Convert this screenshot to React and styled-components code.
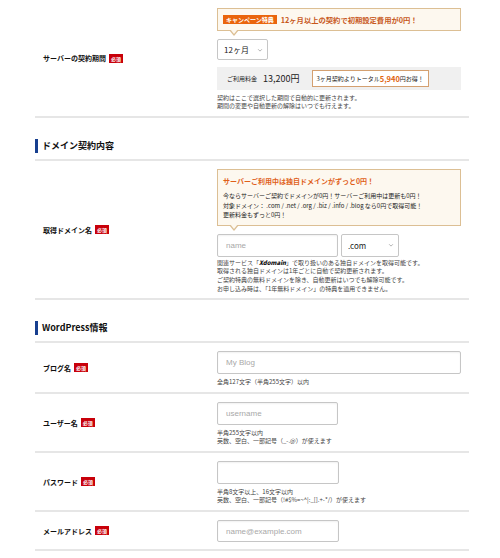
import React from 'react';
import styled, { createGlobalStyle } from 'styled-components';

const GlobalStyle = createGlobalStyle`
  body {
    margin: 0;
    background: #fff;
    font-family: "Noto Sans CJK JP", "Liberation Sans", sans-serif;
    color: #222;
  }
`;

const Page = styled.div`
  width: 434px;
  margin-left: 35px;
`;

const Row = styled.div`
  display: grid;
  grid-template-columns: 182px 1fr;
  border-bottom: 2px solid #e6e6e6;
`;

const Label = styled.div`
  display: flex;
  align-items: center;
  gap: 3px;
  padding-left: 8px;
  font-size: 7px;
  font-weight: 700;
  color: #111;
`;

const Required = styled.span`
  display: inline-flex;
  align-items: center;
  justify-content: center;
  width: 14px;
  height: 9px;
  background: #c8000a;
  color: #fff;
  font-size: 5px;
  font-weight: 700;
`;

const Cell = styled.div`
  display: flex;
  flex-direction: column;
  align-items: flex-start;
  padding: 8px 8px ${p => p.$pb ?? 6}px 0;
`;

const SectionTitle = styled.div`
  padding: 21px 0 6px;
  border-bottom: 2px solid #e6e6e6;
  h2 {
    margin: 0;
    border-left: 3px solid #173f8f;
    padding-left: 4px;
    font-size: 9px;
    line-height: 14px;
    font-weight: 700;
    color: #111;
  }
`;

const Balloon = styled.div`
  position: relative;
  box-sizing: border-box;
  width: 100%;
  background: #fdf8ef;
  border: 1px solid #dcbf94;
  margin-bottom: 8px;
  &::before, &::after {
    content: '';
    position: absolute;
    left: 11px;
    border-style: solid;
    border-color: transparent;
  }
  &::before {
    bottom: -6px;
    border-width: 6px 5px 0;
    border-top-color: #dcbf94;
  }
  &::after {
    left: 12px;
    bottom: -4px;
    border-width: 5px 4px 0;
    border-top-color: #fdf8ef;
  }
`;

const Campaign = styled(Balloon)`
  display: flex;
  align-items: center;
  gap: 4px;
  height: 23px;
  padding: 0 5px;
  font-size: 7.3px;
  font-weight: 700;
  color: #c8581c;
`;

const CampaignBadge = styled.span`
  display: inline-flex;
  align-items: center;
  justify-content: center;
  height: 9px;
  padding: 0 3px;
  background: #ea650d;
  color: #fff;
  font-size: 6px;
  font-weight: 700;
`;

const DomainBox = styled(Balloon)`
  padding: 6px 5px 5px;
  h3 {
    margin: 0 0 4px;
    font-size: 7px;
    line-height: 11px;
    font-weight: 700;
    color: #e0601a;
  }
  p {
    margin: 0;
    font-size: 6px;
    line-height: 9.5px;
    color: #222;
  }
`;

const SelectBox = styled.div`
  display: flex;
  align-items: center;
  justify-content: space-between;
  box-sizing: border-box;
  width: ${p => p.$w}px;
  height: ${p => p.$h ?? 22}px;
  padding: 0 4px 0 6px;
  border: 1px solid #c6c6c6;
  border-radius: 2px;
  background: #fff;
  font-size: 8px;
  color: #222;
  svg { width: 6px; height: 6px; }
`;

const Input = styled.input`
  box-sizing: border-box;
  width: ${p => p.$w}px;
  height: ${p => p.$h ?? 23}px;
  padding: 0 8px;
  border: 1px solid #c6c6c6;
  border-radius: 2px;
  box-shadow: inset 0 1px 2px rgba(0, 0, 0, 0.06);
  font-family: "Liberation Sans", Arial, sans-serif;
  font-size: 8px;
  color: #222;
  outline: none;
  &::placeholder { color: #a8a8a8; }
`;

const InputRow = styled.div`
  display: flex;
  gap: 3px;
`;

const Price = styled.div`
  display: flex;
  align-items: center;
  box-sizing: border-box;
  width: 100%;
  height: 23px;
  padding-left: 10px;
  margin-top: 7px;
  background: #f0f0f0;
  font-size: 6px;
  color: #222;
  b {
    font-size: 9px;
    font-weight: 400;
    margin: 0 12px 0 6px;
  }
`;

const Saving = styled.span`
  display: inline-flex;
  align-items: center;
  height: 15px;
  padding: 0 4px;
  background: #fff;
  border: 1px solid #d4a070;
  font-size: 6px;
  em {
    font-style: normal;
    font-weight: 700;
    font-size: 7.5px;
    color: #e0640f;
  }
`;

const Notes = styled.div`
  margin-top: ${p => p.$mt ?? 4}px;
  font-size: 6px;
  line-height: ${p => p.$lh ?? 8}px;
  color: #444;
  white-space: nowrap;
  b { font-weight: 800; color: #111; font-style: italic; }
`;

const Chevron = () => (
  <svg viewBox="0 0 8 8" fill="none" stroke="#999" strokeWidth="1">
    <path d="M1.5 3l2.5 2.5L6.5 3" />
  </svg>
);

const Req = () => <Required>必須</Required>;

const App = () => {
  return (
    <Page>
      <GlobalStyle />
      <Row>
        <Label>サーバーの契約期間<Req /></Label>
        <Cell>
          <Campaign>
            <CampaignBadge>キャンペーン特典</CampaignBadge>
            12ヶ月以上の契約で初期設定費用が0円！
          </Campaign>
          <SelectBox $w={51} $h={21}>12ヶ月<Chevron /></SelectBox>
          <Price>
            ご利用料金<b>13,200円</b>
            <Saving>3ヶ月契約よりトータル<em>5,940</em>円お得！</Saving>
          </Price>
          <Notes>
            契約はここで選択した期間で自動的に更新されます。<br />
            期間の変更や自動更新の解除はいつでも行えます。
          </Notes>
        </Cell>
      </Row>

      <SectionTitle><h2>ドメイン契約内容</h2></SectionTitle>
      <Row>
        <Label>取得ドメイン名<Req /></Label>
        <Cell $pb={5}>
          <DomainBox>
            <h3>サーバーご利用中は独自ドメインがずっと0円！</h3>
            <p>
              今ならサーバーご契約でドメインが0円！サーバーご利用中は更新も0円！<br />
              対象ドメイン： .com / .net / .org / .biz / .info / .blog なら0円で取得可能！<br />
              更新料金もずっと0円！
            </p>
          </DomainBox>
          <InputRow>
            <Input $w={121} placeholder="name" />
            <SelectBox $w={58} $h={23}>.com<Chevron /></SelectBox>
          </InputRow>
          <Notes $mt={2} $lh={8.7}>
            関連サービス「<b>Xdomain</b>」で取り扱いのある独自ドメインを取得可能です。<br />
            取得される独自ドメインは1年ごとに自動で契約更新されます。<br />
            ご契約特典の無料ドメインを除き、自動更新はいつでも解除可能です。<br />
            お申し込み時は、「1年無料ドメイン」の特典を適用できません。
          </Notes>
        </Cell>
      </Row>

      <SectionTitle><h2>WordPress情報</h2></SectionTitle>
      <Row>
        <Label>ブログ名<Req /></Label>
        <Cell>
          <Input $w={244} placeholder="My Blog" />
          <Notes>全角127文字（半角255文字）以内</Notes>
        </Cell>
      </Row>
      <Row>
        <Label>ユーザー名<Req /></Label>
        <Cell>
          <Input $w={121} placeholder="username" />
          <Notes>
            半角255文字以内<br />
            英数、空白、一部記号（_-.@）が使えます
          </Notes>
        </Cell>
      </Row>
      <Row>
        <Label>パスワード<Req /></Label>
        <Cell>
          <Input $w={122} type="password" />
          <Notes>
            半角8文字以上、16文字以内<br />
            英数、空白、一部記号（!#$%=~^|:_[].+-*/）が使えます
          </Notes>
        </Cell>
      </Row>
      <Row>
        <Label>メールアドレス<Req /></Label>
        <Cell $pb={7}>
          <Input $w={122} $h={22} placeholder="name@example.com" />
        </Cell>
      </Row>
    </Page>
  );
};

export default App;
